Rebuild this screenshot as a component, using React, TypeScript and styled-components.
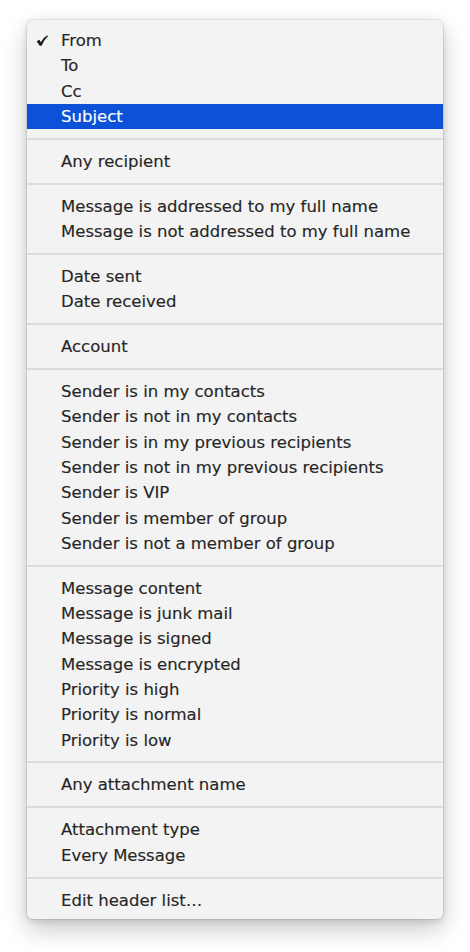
import React from "react";
import styled, { createGlobalStyle } from "styled-components";

const Global = createGlobalStyle`
  html, body { margin: 0; padding: 0; background: #ffffff; }
  body { font-family: "DejaVu Sans", "Liberation Sans", sans-serif; }
`;

const Page = styled.div`
  width: 470px;
  height: 952px;
  padding: 20px 0 0 27px;
  box-sizing: border-box;
`;

const Menu = styled.div`
  width: 416px;
  box-sizing: border-box;
  background: #f3f3f3;
  border-radius: 6px;
  padding: 8px 0 6px;
  box-shadow: 0 0 0 1px rgba(0, 0, 0, 0.07), 0 10px 24px rgba(0, 0, 0, 0.22),
    0 2px 6px rgba(0, 0, 0, 0.12);
  overflow: hidden;
`;

const Item = styled.div<{ $active?: boolean }>`
  position: relative;
  height: 25.3px;
  display: flex;
  align-items: center;
  padding-left: 34px;
  font-size: 16.5px;
  letter-spacing: 0;
  color: ${(p) => (p.$active ? "#ffffff" : "#262626")};
  -webkit-text-stroke: 0.15px ${(p) => (p.$active ? "#ffffff" : "#262626")};
  background: ${(p) => (p.$active ? "#0d51d8" : "transparent")};
  white-space: nowrap;
`;

const Check = styled.svg`
  position: absolute;
  left: 9px;
  top: 7px;
  width: 12px;
  height: 11px;
`;

const Separator = styled.div`
  height: 19.6px;
  display: flex;
  align-items: center;
  &::after {
    content: "";
    display: block;
    width: 100%;
    height: 2px;
    background: #dcdcdc;
  }
`;

type Entry = { label: string; checked?: boolean; active?: boolean };

const groups: Entry[][] = [
  [
    { label: "From", checked: true },
    { label: "To" },
    { label: "Cc" },
    { label: "Subject", active: true },
  ],
  [{ label: "Any recipient" }],
  [
    { label: "Message is addressed to my full name" },
    { label: "Message is not addressed to my full name" },
  ],
  [{ label: "Date sent" }, { label: "Date received" }],
  [{ label: "Account" }],
  [
    { label: "Sender is in my contacts" },
    { label: "Sender is not in my contacts" },
    { label: "Sender is in my previous recipients" },
    { label: "Sender is not in my previous recipients" },
    { label: "Sender is VIP" },
    { label: "Sender is member of group" },
    { label: "Sender is not a member of group" },
  ],
  [
    { label: "Message content" },
    { label: "Message is junk mail" },
    { label: "Message is signed" },
    { label: "Message is encrypted" },
    { label: "Priority is high" },
    { label: "Priority is normal" },
    { label: "Priority is low" },
  ],
  [{ label: "Any attachment name" }],
  [{ label: "Attachment type" }, { label: "Every Message" }],
  [{ label: "Edit header list…" }],
];

export default function App() {
  return (
    <>
      <Global />
      <Page>
        <Menu>
          {groups.map((g, gi) => (
            <React.Fragment key={gi}>
              {gi > 0 && <Separator />}
              {g.map((e) => (
                <Item key={e.label} $active={e.active}>
                  {e.checked && (
                    <Check viewBox="0 0 11 10">
                      <path
                        d="M0.6 5.6 L3.2 4.3 L4.4 6.6 Q6.5 2.5 10.4 0.3 L10.9 1.2 Q7.5 4.2 5.1 9.8 L3.4 9.8 Z"
                        fill="#1a1a1a"
                      />
                    </Check>
                  )}
                  {e.label}
                </Item>
              ))}
            </React.Fragment>
          ))}
        </Menu>
      </Page>
    </>
  );
}
